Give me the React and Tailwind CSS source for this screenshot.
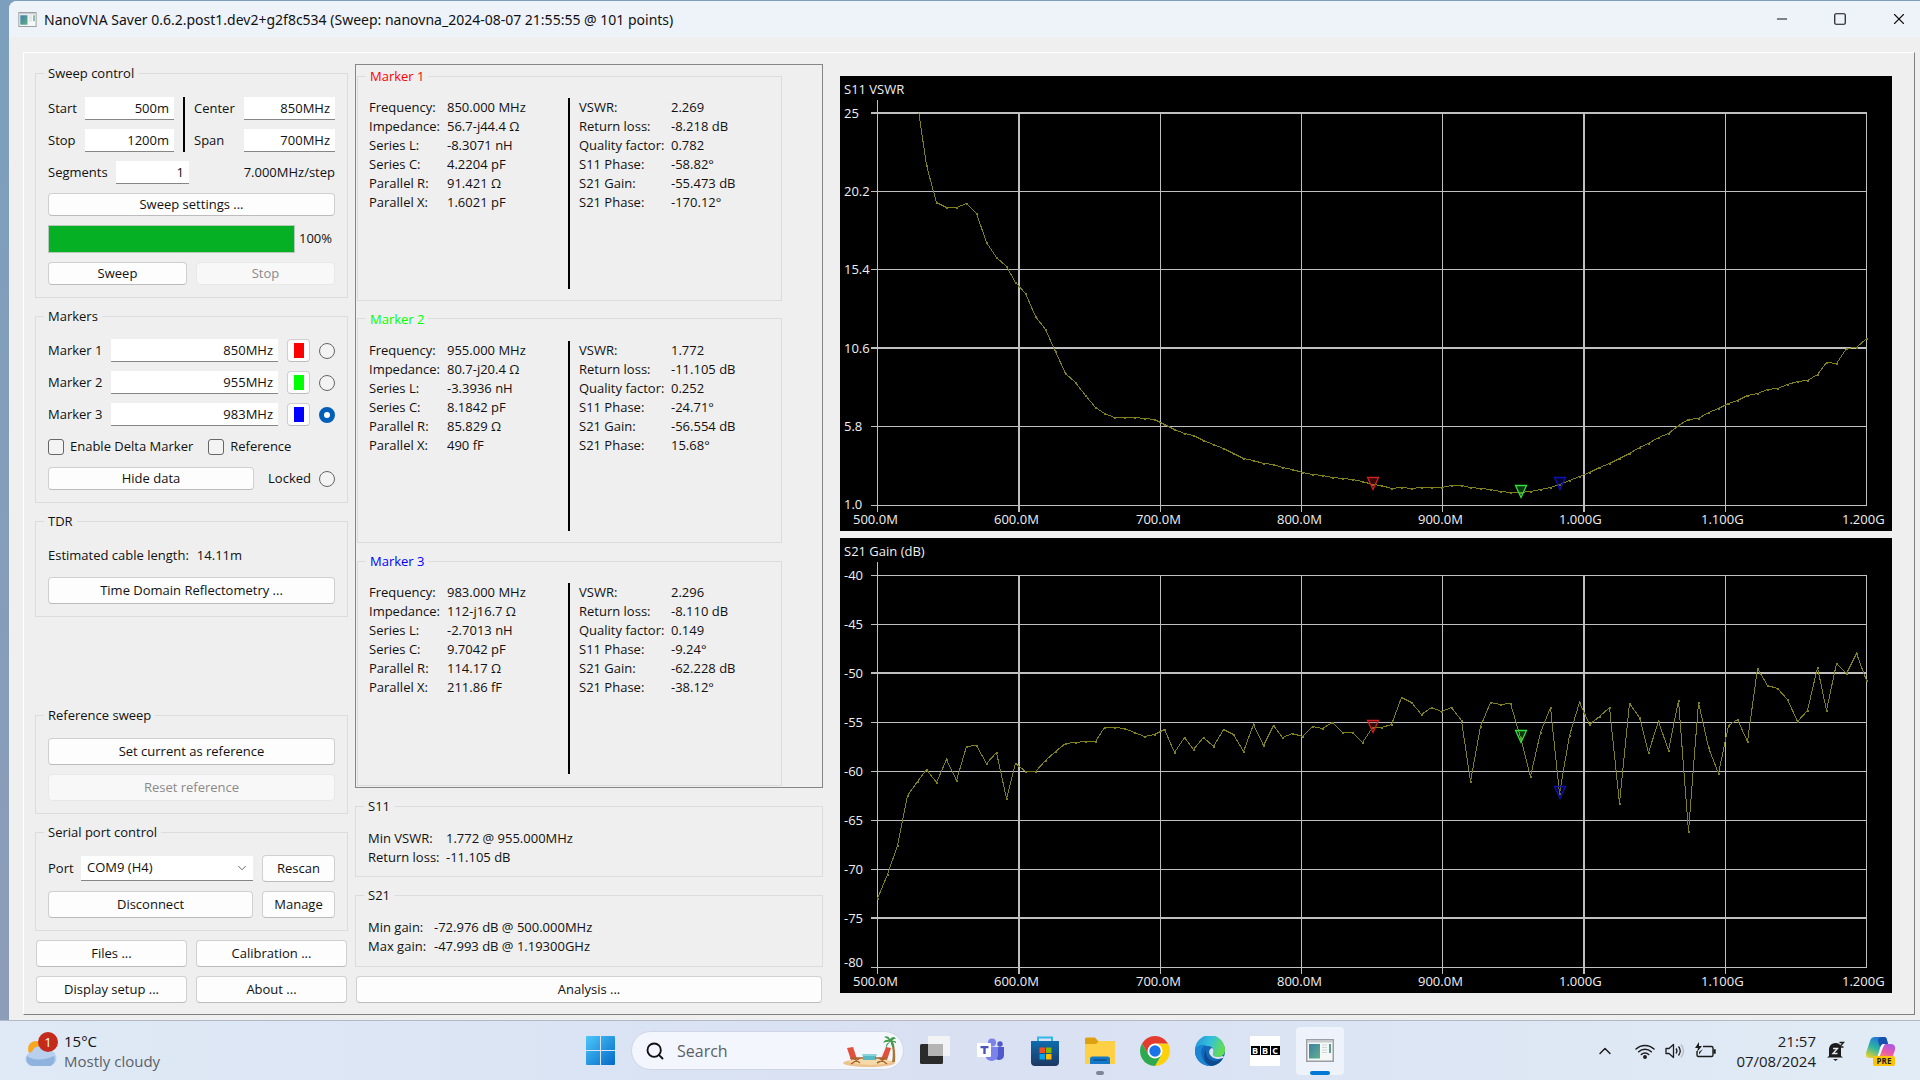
import { useState } from 'react';
import { ChevronDown, ChevronUp, Minus, Search, Square, X } from 'lucide-react';

const FIRST_FREQ = 500;
const LAST_FREQ = 1200;

const VSWR = [
    40, 36, 32, 28.5, 25.6, 21.8, 19.53, 19.27, 19.27, 19.5, 18.86, 17.13, 16.2, 15.65, 14.68, 13.98, 12.6, 11.76, 10.45, 9.09,
    8.54, 7.76, 7.01, 6.64, 6.4, 6.41, 6.41, 6.35, 6.27, 5.95, 5.64, 5.42, 5.27, 4.95, 4.72, 4.52, 4.21, 3.89, 3.76, 3.58,
    3.5, 3.34, 3.19, 3.03, 2.89, 2.83, 2.72, 2.66, 2.6, 2.46, 2.269, 2.2, 2.06, 2.12, 2.06, 2.12, 2.13, 2.13, 2.22, 2.2,
    2.12, 2.04, 1.96, 1.88, 1.8, 1.772, 1.87, 1.96, 2.1, 2.296, 2.52, 2.76, 3.03, 3.3, 3.58, 3.9, 4.21, 4.56, 4.82, 5.17,
    5.42, 5.89, 6.25, 6.34, 6.72, 6.95, 7.27, 7.42, 7.72, 7.86, 8.09, 8.15, 8.39, 8.62, 8.68, 9.0, 9.76, 9.72, 10.6, 10.68,
    11.25,
];

const GAIN = [
    -72.976, -70.5, -67.5, -62.4, -61, -59.8, -61.1, -58.8, -60.9, -57.4, -57.3, -59.2, -58.07, -62.74, -59.2, -59.95, -59.95,
    -58.9, -58, -57.15, -57.05, -56.9, -56.9, -55.5, -55.5, -55.6, -56, -56.4, -56.25, -55.75, -58.1, -56.5, -57.8, -56.5,
    -57.4, -55.75, -56.25, -58, -55.25, -57.3, -55.35, -56.5, -56.1, -56.4, -55.4, -55.6, -55, -56, -56, -57.05, -55.473,
    -55.5, -55.25, -52.45, -52.95, -54.2, -53.5, -53.9, -53.5, -54.75, -60.97, -55.4, -52.95, -53.15, -53.1, -56.554, -60.5,
    -56, -53.5, -62.228, -56.3, -52.95, -55.25, -54.4, -53.5, -63.3, -53.05, -54.45, -58.05, -54.85, -57.85, -52.75, -66.1,
    -52.95, -57.5, -60.25, -55.3, -54.7, -56.95, -49.5, -51.25, -51.5, -52.7, -54.85, -53.75, -49.4, -53.8, -48.97, -49.95,
    -47.993, -50.7,
];

const MARKERS = [
    {
        name: 'Marker 1',
        freq: 850,
        title: 'text-[#ff0000]',
        swatch: 'bg-[#ff0000]',
        stroke: '#d42020',
        left: [
            ['Frequency:', '850.000 MHz'],
            ['Impedance:', '56.7-j44.4 Ω'],
            ['Series L:', '-8.3071 nH'],
            ['Series C:', '4.2204 pF'],
            ['Parallel R:', '91.421 Ω'],
            ['Parallel X:', '1.6021 pF'],
        ],
        right: [
            ['VSWR:', '2.269'],
            ['Return loss:', '-8.218 dB'],
            ['Quality factor:', '0.782'],
            ['S11 Phase:', '-58.82°'],
            ['S21 Gain:', '-55.473 dB'],
            ['S21 Phase:', '-170.12°'],
        ],
    },
    {
        name: 'Marker 2',
        freq: 955,
        title: 'text-[#00ff00]',
        swatch: 'bg-[#00ff00]',
        stroke: '#30e040',
        left: [
            ['Frequency:', '955.000 MHz'],
            ['Impedance:', '80.7-j20.4 Ω'],
            ['Series L:', '-3.3936 nH'],
            ['Series C:', '8.1842 pF'],
            ['Parallel R:', '85.829 Ω'],
            ['Parallel X:', '490 fF'],
        ],
        right: [
            ['VSWR:', '1.772'],
            ['Return loss:', '-11.105 dB'],
            ['Quality factor:', '0.252'],
            ['S11 Phase:', '-24.71°'],
            ['S21 Gain:', '-56.554 dB'],
            ['S21 Phase:', '15.68°'],
        ],
    },
    {
        name: 'Marker 3',
        freq: 983,
        title: 'text-[#0000ff]',
        swatch: 'bg-[#0000ff]',
        stroke: '#1212b4',
        left: [
            ['Frequency:', '983.000 MHz'],
            ['Impedance:', '112-j16.7 Ω'],
            ['Series L:', '-2.7013 nH'],
            ['Series C:', '9.7042 pF'],
            ['Parallel R:', '114.17 Ω'],
            ['Parallel X:', '211.86 fF'],
        ],
        right: [
            ['VSWR:', '2.296'],
            ['Return loss:', '-8.110 dB'],
            ['Quality factor:', '0.149'],
            ['S11 Phase:', '-9.24°'],
            ['S21 Gain:', '-62.228 dB'],
            ['S21 Phase:', '-38.12°'],
        ],
    },
];

const Group = ({ title, titleClass = '', className = '', children }) => (
    <fieldset className={`min-w-0 border border-[#dcdcdc] ${className}`}>
        <legend className={`ml-2 px-1 h-[18px] leading-[18px] ${titleClass}`}>{title}</legend>
        {children}
    </fieldset>
);

const Button = ({ className = '', children, ...props }) => (
    <button
        type="button"
        className={`flex items-center justify-center rounded-[4px] border border-[#d0d0d0] border-b-[#bcbcbc] bg-[#fdfdfd] hover:bg-white disabled:border-[#e8e8e8] disabled:bg-[#f8f8f8] disabled:text-[#8a8a8a] ${className}`}
        {...props}
    >
        {children}
    </button>
);

const Field = ({ className = '', ...props }) => (
    <input
        type="text"
        className={`h-[23px] min-w-0 border-b border-[#868686] bg-white px-[5px] text-right outline-none ${className}`}
        {...props}
    />
);

const radioClass =
    'size-4 shrink-0 appearance-none rounded-full border border-[#666] bg-[#f3f3f3] checked:border-[5px] checked:border-[#005fb8] checked:bg-white';
const checkClass = 'size-4 shrink-0 appearance-none rounded-[3px] border border-[#666] bg-[#f3f3f3] checked:bg-[#005fb8]';

const SweepControl = () => (
    <Group title="Sweep control">
        <div className="flex flex-col gap-[9px] px-3 pt-[15px] pb-3">
            <div className="flex gap-[9px]">
                <div className="grid w-[126px] grid-cols-[37px_1fr] items-center gap-y-[9px]">
                    <label htmlFor="start">Start</label>
                    <Field id="start" defaultValue="500m" />
                    <label htmlFor="stop">Stop</label>
                    <Field id="stop" defaultValue="1200m" />
                </div>
                <div className="w-[2px] bg-black" />
                <div className="grid flex-1 grid-cols-[50px_1fr] items-center gap-y-[9px]">
                    <label htmlFor="center">Center</label>
                    <Field id="center" defaultValue="850MHz" />
                    <label htmlFor="span">Span</label>
                    <Field id="span" defaultValue="700MHz" />
                </div>
            </div>
            <div className="flex items-center">
                <label htmlFor="segments" className="w-[68px]">Segments</label>
                <Field id="segments" defaultValue="1" className="w-[73px]" />
                <span className="ml-auto">7.000MHz/step</span>
            </div>
            <Button className="h-[23px]">Sweep settings ...</Button>
            <div className="flex h-7 items-center gap-1">
                <div role="progressbar" aria-label="Sweep progress" aria-valuenow={100} className="h-full flex-1 border border-[#b8c8b8]">
                    <div className="h-full bg-[#06b025]" style={{ width: '100%' }} />
                </div>
                <span className="w-[36px]">100%</span>
            </div>
            <div className="grid grid-cols-2 gap-[9px]">
                <Button className="h-[23px]">Sweep</Button>
                <Button className="h-[23px]" disabled>Stop</Button>
            </div>
        </div>
    </Group>
);

const MarkerControl = () => {
    const [active, setActive] = useState('Marker 3');

    return (
        <Group title="Markers">
            <div className="flex flex-col gap-[9px] px-3 pt-[14px] pb-3">
                {MARKERS.map((m) => (
                    <div key={m.name} className="flex items-center">
                        <label htmlFor={m.name} className="w-[63px]">{m.name}</label>
                        <Field id={m.name} defaultValue={`${m.freq}MHz`} className="flex-1" />
                        <Button className="mx-[9px] size-[23px]" aria-label={`${m.name} colour`}>
                            <span className={`h-[15px] w-[10px] ${m.swatch}`} />
                        </Button>
                        <input
                            type="radio"
                            name="active-marker"
                            aria-label={`Select ${m.name}`}
                            checked={active === m.name}
                            onChange={() => setActive(m.name)}
                            className={radioClass}
                        />
                    </div>
                ))}
                <div className="flex h-[23px] items-center gap-[15px]">
                    <label className="flex items-center gap-[6px]">
                        <input type="checkbox" className={checkClass} />
                        Enable Delta Marker
                    </label>
                    <label className="flex items-center gap-[6px]">
                        <input type="checkbox" className={checkClass} />
                        Reference
                    </label>
                </div>
                <div className="flex items-center">
                    <Button className="h-[23px] w-[206px]">Hide data</Button>
                    <label className="ml-auto flex items-center gap-2">
                        Locked
                        <input type="radio" name="locked" className={radioClass} />
                    </label>
                </div>
            </div>
        </Group>
    );
};

const SerialControl = () => (
    <Group title="Serial port control">
        <div className="flex flex-col gap-[9px] px-3 pt-[14px] pb-3">
            <div className="flex items-center gap-[9px]">
                <div className="flex flex-1 items-center">
                    <label htmlFor="port" className="w-[33px]">Port</label>
                    <div className="relative flex-1">
                        <select
                            id="port"
                            className="block h-[25px] w-full appearance-none border-b border-[#868686] bg-white pl-[6px] outline-none"
                        >
                            <option>COM9 (H4)</option>
                        </select>
                        <ChevronDown size={14} strokeWidth={1.5} className="pointer-events-none absolute top-[5px] right-[4px] text-[#555]" />
                    </div>
                </div>
                <Button className="h-[27px] w-[73px]">Rescan</Button>
            </div>
            <div className="flex gap-[9px]">
                <Button className="h-[27px] flex-1">Disconnect</Button>
                <Button className="h-[27px] w-[73px]">Manage</Button>
            </div>
        </div>
    </Group>
);

const ControlColumn = () => (
    <div className="flex w-[313px] shrink-0 flex-col gap-[9px]">
        <SweepControl />
        <MarkerControl />
        <Group title="TDR">
            <div className="flex flex-col gap-[9px] px-3 pt-[14px] pb-3">
                <p className="flex h-6 items-center gap-2">
                    <span>Estimated cable length:</span>
                    <span>14.11m</span>
                </p>
                <Button className="h-[27px]">Time Domain Reflectometry ...</Button>
            </div>
        </Group>
        <Group title="Reference sweep" className="mt-auto">
            <div className="flex flex-col gap-[9px] px-3 pt-[14px] pb-3">
                <Button className="h-[27px]">Set current as reference</Button>
                <Button className="h-[27px]" disabled>Reset reference</Button>
            </div>
        </Group>
        <SerialControl />
        <div className="mx-px grid grid-cols-2 gap-[9px]">
            <Button className="h-[27px]">Files ...</Button>
            <Button className="h-[27px]">Calibration ...</Button>
            <Button className="h-[27px]">Display setup ...</Button>
            <Button className="h-[27px]">About ...</Button>
        </div>
    </div>
);

const Readings = ({ rows, className }) => (
    <dl className={`grid content-start leading-[19px] whitespace-nowrap ${className}`}>
        {rows.map(([label, value]) => (
            <div key={label} className="contents">
                <dt>{label}</dt>
                <dd>{value}</dd>
            </div>
        ))}
    </dl>
);

const DataColumn = () => (
    <div className="flex w-[468px] shrink-0 flex-col gap-[9px]">
        <div className="flex flex-1 flex-col gap-[9px] border border-[#86868a] pt-[2px] pb-px pl-px">
            {MARKERS.map((m) => (
                <Group key={m.name} title={m.name} titleClass={m.title} className="flex w-[425px] flex-1 flex-col">
                    <div className="flex h-full gap-[9px] px-[11px] pt-[13px] pb-[11px]">
                        <Readings rows={m.left} className="w-[190px] grid-cols-[78px_1fr]" />
                        <div className="w-[2px] bg-black" />
                        <Readings rows={m.right} className="flex-1 grid-cols-[92px_1fr]" />
                    </div>
                </Group>
            ))}
        </div>
        <Group title="S11">
            <Readings
                rows={[['Min VSWR:', '1.772 @ 955.000MHz'], ['Return loss:', '-11.105 dB']]}
                className="grid-cols-[78px_1fr] px-3 pt-[14px] pb-[9px]"
            />
        </Group>
        <Group title="S21">
            <Readings
                rows={[['Min gain:', '-72.976 dB @ 500.000MHz'], ['Max gain:', '-47.993 dB @ 1.19300GHz']]}
                className="grid-cols-[66px_1fr] px-3 pt-[14px] pb-[10px]"
            />
        </Group>
        <Button className="mx-px h-[27px]">Analysis ...</Button>
    </div>
);

const PLOT = { left: 37, right: 1026, top: 37, bottom: 429 };
const X_LABELS = ['500.0M', '600.0M', '700.0M', '800.0M', '900.0M', '1.000G', '1.100G', '1.200G'];

const Chart = ({ title, data, max, min, labels, bold, lastLabelY }) => {
    const xOf = (freq) => PLOT.left + ((freq - FIRST_FREQ) / (LAST_FREQ - FIRST_FREQ)) * (PLOT.right - PLOT.left);
    const yOf = (v) => PLOT.top + ((max - v) / (max - min)) * (PLOT.bottom - PLOT.top);
    const lineY = (i) => Math.floor(PLOT.top + (i * (PLOT.bottom - PLOT.top)) / (labels.length - 1));
    const step = (LAST_FREQ - FIRST_FREQ) / (data.length - 1);
    const points = data.map((v, i) => [Math.round(xOf(FIRST_FREQ + i * step)), Math.round(yOf(v))]);
    const clipId = `clip-${labels.length}`;

    return (
        <svg viewBox="0 0 1052 455" className="block h-auto w-full bg-black" role="img" aria-label={title}>
            <clipPath id={clipId}>
                <rect x="30" y={PLOT.top} width="1010" height={PLOT.bottom - PLOT.top + 10} />
            </clipPath>
            <g fill="#f0f0f0" fontSize="13">
                <text x="4" y="18">{title}</text>
                {labels.map((label, i) => (
                    <text key={label} x="4" y={i === labels.length - 1 ? lastLabelY : lineY(i) + 5}>
                        {label}
                    </text>
                ))}
                {X_LABELS.map((label, i) => (
                    <text key={label} x={Math.round(xOf(500 + i * 100)) - 24} y="448">{label}</text>
                ))}
            </g>
            <g fill="#c0c0c0" shapeRendering="crispEdges">
                {labels.map((label, i) => (
                    <rect
                        key={label}
                        x="31"
                        y={lineY(i) - (bold.includes(i) ? 1 : 0)}
                        width="996"
                        height={bold.includes(i) ? 2 : 1}
                    />
                ))}
                {X_LABELS.map((label, i) => {
                    const top = i === 0 ? 24 : PLOT.top;
                    const end = i === X_LABELS.length - 1 ? PLOT.bottom + 1 : PLOT.bottom + 7;
                    return (
                        <rect
                            key={label}
                            x={Math.round(xOf(500 + i * 100))}
                            y={top}
                            width={i === 1 || i === 5 ? 2 : 1}
                            height={end - top}
                        />
                    );
                })}
            </g>
            <g clipPath={`url(#${clipId})`} shapeRendering="crispEdges">
                <polyline
                    points={points.map(([x, y]) => `${x + 0.5},${y + 0.5}`).join(' ')}
                    fill="none"
                    stroke="#80801e"
                    strokeWidth="1"
                />
                {points.map(([x, y]) => (
                    <rect key={x} x={x} y={y} width="2" height="2" fill="#80801e" />
                ))}
            </g>
            {MARKERS.map((m) => {
                const [x, y] = points[Math.round((m.freq - FIRST_FREQ) / step)];
                return (
                    <path
                        key={m.name}
                        d={`M${x - 4.5} ${y - 6.5}h11l-5.5 12z`}
                        fill={m.stroke}
                        fillOpacity="0.25"
                        stroke={m.stroke}
                        strokeWidth="1.3"
                    />
                );
            })}
        </svg>
    );
};

const AppIcon = ({ className }) => (
    <svg viewBox="0 0 28 23" className={className} aria-hidden="true">
        <defs>
            <linearGradient id="app-pane" x1="0" y1="0" x2="1" y2="1">
                <stop offset="0" stopColor="#3f7fa6" />
                <stop offset="1" stopColor="#5fb08a" />
            </linearGradient>
        </defs>
        <rect x="0.75" y="0.75" width="26.5" height="21.5" fill="#f6f7f7" stroke="#9a9fa3" strokeWidth="1.5" />
        <rect x="1.5" y="1.5" width="25" height="2" fill="#c7cbcd" />
        <rect x="3" y="5" width="11" height="14.5" fill="url(#app-pane)" />
        <path d="M16 6h5M16 8.500h5M16 11h5M16 13.500h5" stroke="#cfd4d6" />
        <rect x="23" y="5" width="2" height="9" fill="#5aa08c" />
    </svg>
);

const TitleBar = () => (
    <header className="flex h-9 shrink-0 items-center bg-[#eef3fa] pl-[9px] font-['Noto_Sans',sans-serif] text-[14px]">
        <AppIcon className="mr-[7px] h-[15px] w-[19px]" />
        <h1>NanoVNA Saver 0.6.2.post1.dev2+g2f8c534 (Sweep: nanovna_2024-08-07 21:55:55 @ 101 points)</h1>
        <div className="ml-auto flex h-full">
            <button type="button" aria-label="Minimize" className="flex w-[58px] items-center justify-center">
                <Minus size={16} strokeWidth={1.5} />
            </button>
            <button type="button" aria-label="Maximize" className="flex w-[58px] items-center justify-center">
                <Square size={14} strokeWidth={2} />
            </button>
            <button type="button" aria-label="Close" className="flex w-[51px] items-center justify-center pl-2">
                <X size={18} strokeWidth={1.5} />
            </button>
        </div>
    </header>
);

const WeatherIcon = () => (
    <svg viewBox="0 0 36 38" className="h-[38px] w-[36px]" aria-hidden="true">
        <circle cx="12" cy="17" r="8" fill="#f6a623" />
        <path d="M9 34a7 7 0 0 1-1-14 9 9 0 0 1 16-2 8 8 0 0 1 1 16z" fill="#b8d0ee" />
        <path d="M9 34a7 7 0 0 1-6-10c5 4 16 5 27 0 2 5-1 10-5 10z" fill="#8fb2de" />
        <circle cx="24" cy="10" r="10" fill="#c42b1c" />
        <text x="24" y="15" textAnchor="middle" fontSize="13" fill="#fff">1</text>
    </svg>
);

const BeachIcon = () => (
    <svg viewBox="0 0 54 32" className="h-8 w-[54px]" aria-hidden="true">
        <ellipse cx="27" cy="28" rx="26" ry="4" fill="#ecc38c" />
        <path d="M6 27q20-8 44 0-20 6-44 0z" fill="#f5d9a8" />
        <rect x="21" y="19" width="13" height="6" fill="#58b8c4" />
        <path d="M20 20h15" stroke="#9adce0" strokeWidth="1.5" />
        <path d="M5 13l6-1 4 12-6 1zM39 24l5-12 5 1-4 12z" fill="#e2503e" />
        <path d="M8 23h13M9 29l9-6M18 28l-7-5M33 23h12M35 28l9-5M45 29l-8-6" stroke="#a8642c" strokeWidth="1.5" />
        <path d="M49 7q3 10 1 20h3q1-11-2-20z" fill="#a97434" />
        <path d="M49 7Q44 2 41 8q4-2 8-1Q43 8 44 13q2-5 5-6 0 4 3 6 1-4-2-6 4 0 5 3 0-5-5-4 2-3 4-2-2-4-6 0-2-4-6-2 4 1 6 5z" fill="#3f9a4a" />
    </svg>
);

const taskIcons = {
    Start: (
        <svg viewBox="0 0 29 29" className="size-[29px]">
            <defs>
                <linearGradient id="win" x1="0" y1="0" x2="1" y2="1">
                    <stop offset="0" stopColor="#4cc8fb" />
                    <stop offset="1" stopColor="#0468c8" />
                </linearGradient>
            </defs>
            <path d="M1 0h13v14H0V1a1 1 0 0 1 1-1zM15 0h13a1 1 0 0 1 1 1v13H15zM0 15h14v14H1a1 1 0 0 1-1-1zM15 15h14v13a1 1 0 0 1-1 1H15z" fill="url(#win)" />
        </svg>
    ),
    'Task view': (
        <svg viewBox="0 0 30 29" className="h-[29px] w-[30px]">
            <rect x="0" y="8" width="23" height="20" rx="1.500" fill="#2b2b2b" />
            <rect x="8" y="0" width="22" height="20" rx="1" fill="#f4f4f4" fillOpacity="0.92" />
            <rect x="8" y="8" width="15" height="12" fill="#b4b4b4" />
        </svg>
    ),
    Teams: (
        <svg viewBox="0 0 27 25" className="h-[25px] w-[27px]">
            <circle cx="15" cy="4.500" r="4" fill="#7b83eb" />
            <circle cx="23" cy="6" r="2.700" fill="#5059c9" />
            <path d="M18 9h9v8a5 5 0 0 1-9 3z" fill="#5059c9" />
            <path d="M9 9h12v8a6.500 6.500 0 0 1-12 3z" fill="#7b83eb" />
            <rect x="0" y="5" width="14" height="14" rx="1" fill="#fff" />
            <path d="M3.500 8h8v2.200H8.700V16H6.300v-5.800H3.500z" fill="#4b53bc" />
        </svg>
    ),
    'Microsoft Store': (
        <svg viewBox="0 0 30 30" className="size-[30px]">
            <defs>
                <linearGradient id="store" x1="0" y1="0" x2="0" y2="1">
                    <stop offset="0" stopColor="#0f6cae" />
                    <stop offset="1" stopColor="#1c3660" />
                </linearGradient>
            </defs>
            <path d="M8 6V1.500h14V6" fill="none" stroke="#32b8e8" strokeWidth="2" />
            <path d="M1 5h28v21a4 4 0 0 1-4 4H5a4 4 0 0 1-4-4z" fill="url(#store)" />
            <path d="M9.500 11.500H15V17H9.500z" fill="#f25022" />
            <path d="M16 11.500h5.500V17H16z" fill="#7fba00" />
            <path d="M9.500 18H15v5.500H9.500z" fill="#00a4ef" />
            <path d="M16 18h5.500v5.500H16z" fill="#ffb900" />
        </svg>
    ),
    'File Explorer': (
        <svg viewBox="0 0 30 28" className="h-[28px] w-[30px]">
            <path d="M0 2a1.500 1.500 0 0 1 1.500-1.500H10l3 3.500H28a2 2 0 0 1 2 2v5H0z" fill="#dfa010" />
            <path d="M0 7h11l3-3h14a2 2 0 0 1 2 2v21H0z" fill="#fdd045" />
            <path d="M5 27v-5a2.500 2.500 0 0 1 2.500-2.500h15A2.500 2.500 0 0 1 25 22v5z" fill="#1478c8" />
            <path d="M8.500 23h13" stroke="#0b4f90" strokeWidth="1.500" />
        </svg>
    ),
    Chrome: (
        <svg viewBox="0 0 30 30" className="size-[30px]">
            <path d="M27.990 7.500A15 15 0 0 1 15 30l6.500-11.250L15 7.500z" fill="#fdd20a" />
            <path d="M2.010 7.500L8.500 18.750 15 15V7.500h12.990A15 15 0 0 0 2.010 7.500z" fill="#e33b2e" />
            <path d="M2.010 7.500A15 15 0 0 0 15 30l6.500-11.250h-13z" fill="#2da94f" />
            <circle cx="15" cy="15" r="7.500" fill="#fff" />
            <circle cx="15" cy="15" r="5.700" fill="#1a73e8" />
        </svg>
    ),
    Edge: (
        <svg viewBox="0 0 30 30" className="size-[30px]">
            <defs>
                <linearGradient id="edge-top" x1="0" y1="0" x2="1" y2="0.300">
                    <stop offset="0" stopColor="#1f8fd8" />
                    <stop offset="0.550" stopColor="#35c1dc" />
                    <stop offset="1" stopColor="#62dc55" />
                </linearGradient>
            </defs>
            <circle cx="15" cy="15" r="15" fill="#1568b8" />
            <path d="M0 14A15 15 0 0 1 30 14c0 5-4 7-8 7-3 0-5-1-4-3 2-3 0-8-5-8C7 9 1 10 0 14z" fill="url(#edge-top)" />
            <path d="M0 14c1-4 6-6 11-5-5 2-6 7-4 12 1 4 4 7 8 9A15 15 0 0 1 0 14z" fill="#1a86d4" />
            <path d="M11 13c-1 6 2 12 9 12 3 0 5-1 8-3a15 15 0 0 1-11 8C10 29 7 21 11 13z" fill="#0d4a90" />
            <path d="M28 22c-3 1-8 2-12-2-3-3-2-7 1-8 2 1 2 4 1 6-1 3 5 4 9 2l3 1z" fill="#dbe3f4" />
        </svg>
    ),
    BBC: (
        <span className="flex size-[30px] items-center justify-center gap-px bg-white text-[9px] leading-none font-bold text-white">
            {['B', 'B', 'C'].map((letter, i) => (
                <span key={i} className="flex h-[9px] w-[9px] items-center justify-center bg-black">{letter}</span>
            ))}
        </span>
    ),
};

const TaskButton = ({ name }) => (
    <button type="button" aria-label={name} className="relative flex size-12 items-center justify-center rounded-[4px] hover:bg-white/40">
        {taskIcons[name]}
        {name === 'File Explorer' && <span className="absolute bottom-0 left-5 h-1 w-2 rounded-full bg-[#7f8794]" />}
    </button>
);

const Tray = () => (
    <div className="flex items-center justify-end pr-[24px] text-[#1c1c1c]">
        <ChevronUp size={20} strokeWidth={1.75} className="mr-[20px]" />
        <svg viewBox="0 0 20 16" className="mr-[10px] h-4 w-5" fill="none" stroke="currentColor" strokeWidth="1.500" strokeLinecap="round" aria-hidden="true">
            <path d="M1 6a13 13 0 0 1 18 0M3.700 8.800a9 9 0 0 1 12.600 0M6.300 11.500a5.300 5.300 0 0 1 7.400 0" />
            <circle cx="10" cy="14" r="1.200" fill="currentColor" />
        </svg>
        <svg viewBox="0 0 20 16" className="mr-[10px] h-4 w-5" fill="none" stroke="currentColor" strokeWidth="1.300" strokeLinejoin="round" aria-hidden="true">
            <path d="M1 5.500h3L8.500 1.500v13L4 10.500H1z" />
            <path d="M11 5.500q2 2.500 0 5M13.500 3.500q3.500 4.500 0 9" />
            <path d="M16 1.500q5 6.500 0 13" stroke="#b5bcc4" />
        </svg>
        <svg viewBox="0 0 21 18" className="h-[18px] w-[21px]" fill="none" stroke="currentColor" strokeWidth="1.400" aria-hidden="true">
            <path d="M8 4.500h8.500a1.500 1.500 0 0 1 1.500 1.500v7a1.500 1.500 0 0 1-1.500 1.500h-13A1.500 1.500 0 0 1 2 13V9" />
            <path d="M18.500 8h1.500v3h-1.500" fill="currentColor" />
            <path d="M4 0L0 6h3l-1 4 5-6H4z" fill="currentColor" stroke="none" />
            <path d="M4 12.500V10l4-3z" fill="currentColor" stroke="none" />
        </svg>
        <div className="ml-[20px] text-right text-[15px] leading-5">
            <p>21:57</p>
            <p>07/08/2024</p>
        </div>
        <svg viewBox="0 0 18 20" className="ml-[11px] h-5 w-[18px]" aria-hidden="true">
            <path d="M2 15V8a6.500 6.500 0 0 1 12-3v10l2 1.500H0z" fill="#1c1c1c" />
            <path d="M6 18h5l-2.500 2z" fill="#1c1c1c" />
            <path d="M6 7.500h4.500L6 12.500h4.500" fill="none" stroke="#e0eaf5" strokeWidth="1.400" />
            <path d="M12.500 1.500h4l-4 4.500h4" fill="none" stroke="#1c1c1c" strokeWidth="1.400" />
        </svg>
        <svg viewBox="0 0 30 30" className="ml-[21px] h-[30px] w-[30px]" aria-hidden="true">
            <defs>
                <linearGradient id="cp-left" x1="0.700" y1="0" x2="0.200" y2="1">
                    <stop offset="0" stopColor="#1d6be0" />
                    <stop offset="0.550" stopColor="#2fb6a0" />
                    <stop offset="1" stopColor="#e8d030" />
                </linearGradient>
                <linearGradient id="cp-right" x1="0.700" y1="0" x2="0.300" y2="1">
                    <stop offset="0" stopColor="#a858e8" />
                    <stop offset="0.600" stopColor="#ea5aa8" />
                    <stop offset="1" stopColor="#fa8a60" />
                </linearGradient>
            </defs>
            <path d="M9 1h9q3 0 3 4l1 3h-5q-2 0-3 4l-2 7q-1 3-4 3H4q-5 0-4-5L4 5q1-4 5-4z" fill="url(#cp-left)" />
            <path d="M17 1h2q2 1 3 7h-5q-2 0-3 3L12 5q0-4 5-4z" fill="#1850b0" />
            <path d="M17 8h8q5 0 4 6l-3 8H13l3-10q0-4 1-4z" fill="url(#cp-right)" />
            <path d="M17 8h2q-2 3-3 6l-3 8h-2l3-8q1-5 3-6z" fill="#f4f7fb" />
            <rect x="7" y="20" width="22" height="10" rx="2" fill="#fcc50c" />
            <text x="18" y="28" textAnchor="middle" fontSize="8" fontWeight="700" fill="#1c1c1c">PRE</text>
        </svg>
    </div>
);

const Taskbar = () => (
    <footer className="grid h-[60px] shrink-0 grid-cols-[1fr_auto_1fr] items-center border-t border-[#b4b8c4] bg-linear-to-r from-[#dfeaf6] via-[#d8e0f2] to-[#e1ecf6]">
        <div className="flex items-center gap-1 pl-6">
            <WeatherIcon />
            <div className="text-[15px] leading-5">
                <p>15°C</p>
                <p className="text-[#5c6068]">Mostly cloudy</p>
            </div>
        </div>
        <nav className="flex items-center gap-[7px]" aria-label="Taskbar">
            <TaskButton name="Start" />
            <label className="flex h-[39px] w-[273px] items-center rounded-full border border-[#d0d6e4] bg-[#f3f7fd] pr-[7px] pl-[13px]">
                <Search size={20} strokeWidth={2.25} className="shrink-0" />
                <input
                    type="search"
                    aria-label="Search"
                    placeholder="Search"
                    className="ml-3 min-w-0 flex-1 bg-transparent text-[16px] outline-none placeholder:text-[#5c6068]"
                />
                <BeachIcon />
            </label>
            <TaskButton name="Task view" />
            <TaskButton name="Teams" />
            <TaskButton name="Microsoft Store" />
            <TaskButton name="File Explorer" />
            <TaskButton name="Chrome" />
            <TaskButton name="Edge" />
            <TaskButton name="BBC" />
            <button type="button" aria-label="NanoVNA Saver" className="relative flex size-12 items-center justify-center rounded-[4px] bg-[#eef2fa]">
                <AppIcon className="h-[23px] w-[28px]" />
                <span className="absolute bottom-0 left-[14px] h-1 w-5 rounded-full bg-[#0078d4]" />
            </button>
        </nav>
        <Tray />
    </footer>
);

const App = () => (
    <div className="flex min-h-screen flex-col bg-linear-to-b from-[#7b9fbc] to-[#8e9cb8] font-['Open_Sans',sans-serif] text-[13px] text-[#111]">
        <div className="mt-px ml-[9px] flex flex-1 flex-col overflow-hidden rounded-tl-lg bg-[#efefef]">
            <TitleBar />
            <main className="mt-[15px] mr-[5px] mb-[5px] ml-[14px] flex flex-1 border border-t-white border-r-[#808080] border-b-[#808080] border-l-white pt-[11px] pr-[22px] pb-[11px] pl-[11px]">
                <ControlColumn />
                <div className="ml-[7px] flex">
                    <DataColumn />
                </div>
                <div className="ml-[17px] flex min-w-0 flex-1 flex-col gap-[7px] pt-3">
                    <Chart
                        title="S11 VSWR"
                        data={VSWR}
                        max={25}
                        min={1}
                        labels={['25', '20.2', '15.4', '10.6', '5.8', '1.0']}
                        bold={[0, 3]}
                        lastLabelY={433}
                    />
                    <Chart
                        title="S21 Gain (dB)"
                        data={GAIN}
                        max={-40}
                        min={-80}
                        labels={['-40', '-45', '-50', '-55', '-60', '-65', '-70', '-75', '-80']}
                        bold={[2, 7]}
                        lastLabelY={429}
                    />
                </div>
            </main>
        </div>
        <Taskbar />
    </div>
);

export default App;
